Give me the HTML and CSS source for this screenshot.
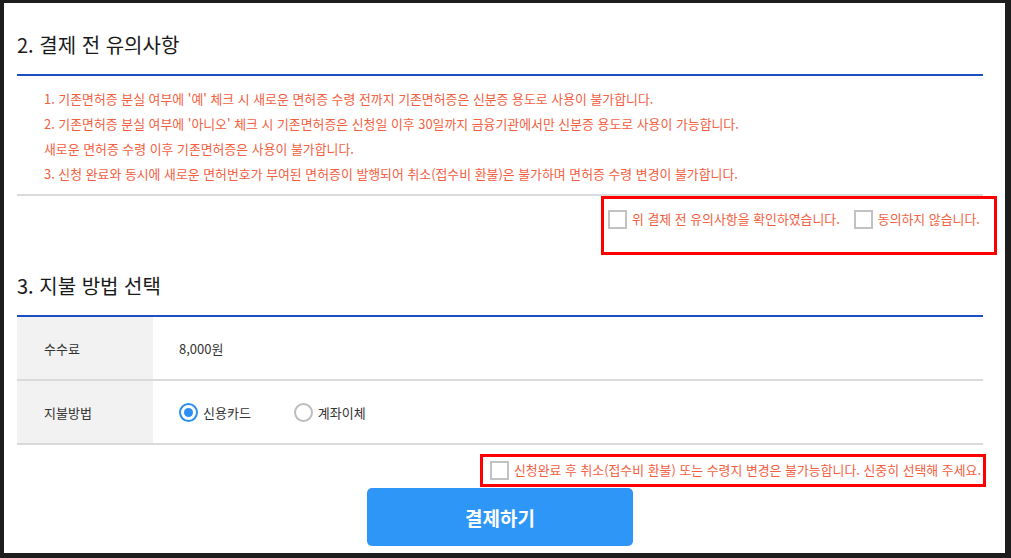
FILE: index.html
```html
<!DOCTYPE html>
<html lang="ko">
<head>
<meta charset="utf-8">
<title>결제</title>
<link rel="stylesheet" href="styles.css">
</head>
<body>
<div class="frame">
  <h2 class="sec-title">2. 결제 전 유의사항</h2>
  <ul class="notice">
    <li>1. 기존면허증 분실 여부에 '예' 체크 시 새로운 면허증 수령 전까지 기존면허증은 신분증 용도로 사용이 불가합니다.</li>
    <li>2. 기존면허증 분실 여부에 '아니오' 체크 시 기존면허증은 신청일 이후 30일까지 금융기관에서만 신분증 용도로 사용이 가능합니다.</li>
    <li>새로운 면허증 수령 이후 기존면허증은 사용이 불가합니다.</li>
    <li>3. 신청 완료와 동시에 새로운 면허번호가 부여된 면허증이 발행되어 취소(접수비 환불)은 불가하며 면허증 수령 변경이 불가합니다.</li>
  </ul>
  <div class="agree-row">
    <div class="mark mark-agree">
      <label class="chk"><span class="box"></span><span>위 결제 전 유의사항을 확인하였습니다.</span></label>
      <label class="chk chk-second"><span class="box"></span><span>동의하지 않습니다.</span></label>
    </div>
  </div>

  <h2 class="sec-title sec-title-2">3. 지불 방법 선택</h2>
  <div class="table">
    <div class="row">
      <div class="th">수수료</div>
      <div class="td">8,000원</div>
    </div>
    <div class="row">
      <div class="th">지불방법</div>
      <div class="td">
        <label class="radio"><span class="ring on"></span><span>신용카드</span></label>
        <label class="radio radio-second"><span class="ring"></span><span>계좌이체</span></label>
      </div>
    </div>
  </div>
  <div class="confirm-row">
    <div class="mark mark-confirm">
      <label class="chk"><span class="box"></span><span>신청완료 후 취소(접수비 환불) 또는 수령지 변경은 불가능합니다. 신중히 선택해 주세요.</span></label>
    </div>
  </div>
  <div class="btn-row">
    <button class="pay-btn" type="button">결제하기</button>
  </div>
</div>
</body>
</html>
```

FILE: styles.css
```css
html, body {
  margin: 0;
  padding: 0;
}
body {
  background: #1d1d1d;
  font-family: "Noto Sans CJK KR", "Noto Sans", sans-serif;
  width: 1011px;
  height: 558px;
  overflow: hidden;
}
.frame {
  margin: 3px 0 0 4px;
  width: 1001px;
  height: 550px;
  background: #fff;
  box-sizing: border-box;
  padding: 0 22px 0 13px;
}
.sec-title {
  margin: 0;
  padding: 25px 0 12px 0;
  line-height: 34px;
  font-size: 20px;
  font-weight: 400;
  color: #1a1a1a;
  border-bottom: 2px solid #1c50c2;
}
.sec-title-2 {
  padding-top: 13px;
}
.notice {
  list-style: none;
  margin: 0;
  padding: 10px 0 8px 27px;
  border-bottom: 2px solid #dadada;
  font-size: 12.9px;
  line-height: 25px;
  color: #f2603f;
}
.agree-row {
  height: 60px;
  display: flex;
  justify-content: flex-end;
  align-items: flex-start;
}
.mark {
  border: 3px solid #ff0000;
  box-sizing: border-box;
  display: flex;
  align-items: flex-start;
}
.mark-agree {
  width: 396px;
  height: 59px;
  margin-right: -14px;
  padding: 10px 0 0 4px;
}
.chk {
  display: flex;
  align-items: center;
  gap: 5px;
  font-size: 12.9px;
  color: #f2603f;
  line-height: 20px;
}
.chk-second {
  margin-left: 14px;
}
.box {
  width: 19px;
  height: 19px;
  box-sizing: border-box;
  border: 2px solid #c2c2c2;
  background: #fff;
  flex: none;
}
.table {
  display: flex;
  flex-direction: column;
}
.row {
  display: flex;
  height: 64px;
  box-sizing: border-box;
  border-bottom: 2px solid #dadada;
}
.th {
  width: 136px;
  background: #f2f2f2;
  box-sizing: border-box;
  padding-left: 27px;
  display: flex;
  align-items: center;
  font-size: 13px;
  color: #333;
}
.td {
  flex: 1;
  padding-left: 26px;
  display: flex;
  align-items: center;
  font-size: 13px;
  color: #333;
}
.radio {
  display: flex;
  align-items: center;
  gap: 5px;
}
.radio-second {
  margin-left: 43px;
}
.ring {
  width: 19px;
  height: 19px;
  box-sizing: border-box;
  border: 2px solid #bdbdbd;
  border-radius: 50%;
  display: flex;
  align-items: center;
  justify-content: center;
  flex: none;
}
.ring.on {
  border-color: #2b8ef0;
}
.ring.on::after {
  content: "";
  width: 9px;
  height: 9px;
  border-radius: 50%;
  background: #2b8ef0;
}
.confirm-row {
  display: flex;
  justify-content: flex-end;
  margin-top: 9px;
}
.mark-confirm {
  height: 33px;
  margin-right: -3px;
  padding: 3px 2px 0 7px;
}
.btn-row {
  display: flex;
  justify-content: center;
  margin-top: 1px;
}
.pay-btn {
  width: 266px;
  height: 58px;
  border: 0;
  border-radius: 5px;
  background: #2d96f7;
  color: #fff;
  font-family: "Noto Sans CJK KR", sans-serif;
  font-size: 19px;
  font-weight: 700;
  padding: 0;
}
```
